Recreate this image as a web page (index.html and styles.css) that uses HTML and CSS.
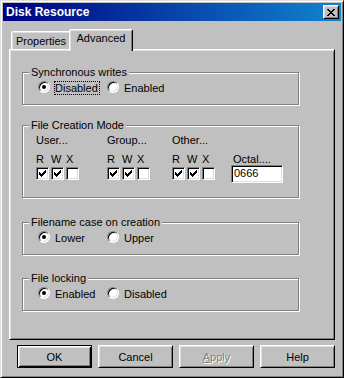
FILE: index.html
```html
<!DOCTYPE html>
<html lang="en">
  <head>
    <meta charset="utf-8"/>
    <title>Disk Resource</title>
    <link rel="stylesheet" href="styles.css">
  </head>
  <body>
    <div class="dialog">
      <div class="dialog__titlebar">
        <span class="dialog__title">Disk Resource</span>
        <button type="button" class="dialog__close" aria-label="Close">
          <svg width="8" height="7" viewBox="0 0 8 7" shape-rendering="crispEdges">
            <path fill="#000" d="M0 0h2v1H0zM6 0h2v1H6zM1 1h2v1H1zM5 1h2v1H5zM2 2h4v1H2zM3 3h2v1H3zM2 4h4v1H2zM1 5h2v1H1zM5 5h2v1H5zM0 6h2v1H0zM6 6h2v1H6z"/>
          </svg>
        </button>
      </div>

      <div class="dialog__body">
        <div class="tabs">
          <div class="tabs__tab">Properties</div>
          <div class="tabs__tab tabs__tab--active">Advanced</div>
        </div>

        <div class="tabs__panel">
          <fieldset class="group">
            <legend class="group__title">Synchronous writes</legend>
            <div class="options">
              <label class="option"><span class="radio radio--checked"></span><span class="option__text option__text--focus">Disabled</span></label>
              <label class="option"><span class="radio"></span><span class="option__text">Enabled</span></label>
            </div>
          </fieldset>

          <fieldset class="group group--mode">
            <legend class="group__title">File Creation Mode</legend>
            <div class="mode">
              <div class="perm">
                <div class="perm__label">User...</div>
                <div class="perm__letters"><span>R</span><span>W</span><span>X</span></div>
                <div class="perm__checks">
                  <span class="check check--on"></span><span class="check check--on"></span><span class="check"></span>
                </div>
              </div>
              <div class="perm">
                <div class="perm__label">Group...</div>
                <div class="perm__letters"><span>R</span><span>W</span><span>X</span></div>
                <div class="perm__checks">
                  <span class="check check--on"></span><span class="check check--on"></span><span class="check"></span>
                </div>
              </div>
              <div class="perm">
                <div class="perm__label">Other...</div>
                <div class="perm__letters"><span>R</span><span>W</span><span>X</span></div>
                <div class="perm__checks">
                  <span class="check check--on"></span><span class="check check--on"></span><span class="check"></span>
                </div>
              </div>
              <div class="octal">
                <div class="octal__label">Octal....</div>
                <div class="octal__input">0666</div>
              </div>
            </div>
          </fieldset>

          <fieldset class="group group--case">
            <legend class="group__title">Filename case on creation</legend>
            <div class="options">
              <label class="option"><span class="radio radio--checked"></span><span class="option__text">Lower</span></label>
              <label class="option"><span class="radio"></span><span class="option__text">Upper</span></label>
            </div>
          </fieldset>

          <fieldset class="group group--lock">
            <legend class="group__title">File locking</legend>
            <div class="options">
              <label class="option"><span class="radio radio--checked"></span><span class="option__text">Enabled</span></label>
              <label class="option"><span class="radio"></span><span class="option__text">Disabled</span></label>
            </div>
          </fieldset>
        </div>

        <div class="dialog__buttons">
          <button type="button" class="button button--default">OK</button>
          <button type="button" class="button">Cancel</button>
          <button type="button" class="button button--disabled"><u>A</u>pply</button>
          <button type="button" class="button">Help</button>
        </div>
      </div>
    </div>
  </body>
</html>
```

FILE: styles.css
```css
body {
  margin: 0;
  background: #C0C0C0;
  color: #000;
  font-family: "Liberation Sans", Arial, sans-serif;
  font-size: 11px;
}

.dialog {
  box-sizing: border-box;
  width: 344px;
  height: 378px;
  padding: 2px;
  background: #C0C0C0;
  border: 1px solid;
  border-color: #DFDFDF #000 #000 #DFDFDF;
  box-shadow: inset 1px 1px #FFF, inset -1px -1px #808080;
}

.dialog__titlebar {
  display: flex;
  align-items: center;
  justify-content: space-between;
  height: 18px;
  padding: 0 2px 0 3px;
  background: linear-gradient(to right, #000080, #1084D0);
  color: #FFF;
  font-size: 12px;
  font-weight: bold;
}

.dialog__close {
  display: flex;
  align-items: center;
  justify-content: center;
  box-sizing: border-box;
  width: 16px;
  height: 14px;
  padding: 0 1px 0 0;
  background: #C0C0C0;
  border: 1px solid;
  border-color: #FFF #000 #000 #FFF;
  box-shadow: inset 1px 1px #DFDFDF, inset -1px -1px #808080;
}

.dialog__body {
  padding: 8px 6px 0;
}

/* tabs */
.tabs {
  display: flex;
  align-items: flex-end;
  height: 20px;
  padding-left: 2px;
}

.tabs__tab {
  box-sizing: border-box;
  width: 60px;
  height: 18px;
  padding-top: 2px;
  line-height: 14px;
  text-align: center;
  border: 1px solid;
  border-bottom: 0;
  border-color: #FFF #000 transparent #FFF;
  border-radius: 2px 2px 0 0;
  box-shadow: inset 1px 1px #DFDFDF, inset -1px 0 #808080;
}

.tabs__tab--active {
  position: relative;
  z-index: 1;
  width: 64px;
  height: 22px;
  margin: 0 -2px -2px;
  padding-top: 1px;
  background: #C0C0C0;
}

.tabs__panel {
  box-sizing: border-box;
  height: 291px;
  padding: 16px 0 0 12px;
  border: 1px solid;
  border-color: #FFF #000 #000 #FFF;
  box-shadow: inset 1px 1px #DFDFDF, inset -1px -1px #808080;
}

/* group boxes */
.group {
  box-sizing: border-box;
  width: 277px;
  margin: 0;
  padding: 2px 0 9px;
  border: 1px solid #808080;
  box-shadow: inset 1px 1px #FFF, 1px 1px #FFF;
}

.group--mode {
  margin-top: 14px;
  padding-bottom: 14px;
}

.group--case {
  margin-top: 18px;
}

.group--lock {
  margin-top: 17px;
}

.group__title {
  margin-left: 6px;
  padding: 0 2px;
  line-height: 13px;
  background: #C0C0C0;
}

.options {
  display: flex;
  padding-left: 15px;
}

.option {
  display: flex;
  align-items: flex-start;
  gap: 4px;
  width: 69px;
}

.option__text {
  padding-right: 1px;
  line-height: 12px;
  border: 1px dotted transparent;
}

.option__text--focus {
  border-color: #000;
}

.radio {
  position: relative;
  box-sizing: border-box;
  width: 12px;
  height: 12px;
  flex: none;
  background: #FFF;
  border: 1px solid;
  border-color: #808080 #FFF #FFF #808080;
  border-radius: 50%;
  box-shadow: inset 1px 1px #000, inset -1px -1px #DFDFDF;
}

.radio--checked::after {
  content: "";
  position: absolute;
  top: 3px;
  left: 3px;
  width: 4px;
  height: 4px;
  background: #000;
  border-radius: 50%;
}

/* file creation mode */
.mode {
  display: grid;
  grid-template-columns: 71px 65px 59px auto;
  padding-left: 13px;
}

.perm__label {
  margin-bottom: 6px;
  line-height: 13px;
}

.perm__letters,
.perm__checks {
  display: flex;
  gap: 2px;
}

.perm__letters span {
  width: 13px;
  line-height: 13px;
}

.perm__checks {
  margin-top: 1px;
}

.check {
  box-sizing: border-box;
  width: 13px;
  height: 13px;
  padding: 2px 0 0 2px;
  background: #FFF;
  border: 1px solid;
  border-color: #808080 #FFF #FFF #808080;
  box-shadow: inset 1px 1px #000, inset -1px -1px #DFDFDF;
}

.check--on {
  background: #FFF url("data:image/svg+xml,%3Csvg xmlns='http://www.w3.org/2000/svg' width='7' height='7' shape-rendering='crispEdges'%3E%3Cpath d='M6 0h1v1H6zM5 1h2v1H5zM0 2h1v1H0zM4 2h3v1H4zM0 3h2v1H0zM3 3h3v1H3zM0 4h5v1H0zM1 5h3v1H1zM2 6h1v1H2z'/%3E%3C/svg%3E") no-repeat 2px 2px;
}

.octal {
  padding-top: 19px;
}

.octal__label {
  padding-left: 2px;
  line-height: 12px;
}

.octal__input {
  box-sizing: border-box;
  width: 52px;
  height: 18px;
  padding-left: 2px;
  line-height: 15px;
  background: #FFF;
  border: 1px solid;
  border-color: #808080 #FFF #FFF #808080;
  box-shadow: inset 1px 1px #000, inset -1px -1px #DFDFDF;
}

/* buttons */
.dialog__buttons {
  display: flex;
  justify-content: flex-end;
  gap: 6px;
  margin-top: 5px;
}

.button {
  box-sizing: border-box;
  width: 75px;
  height: 23px;
  padding: 0;
  background: #C0C0C0;
  border: 1px solid;
  border-color: #FFF #000 #000 #FFF;
  box-shadow: inset 1px 1px #DFDFDF, inset -1px -1px #808080;

  color: #000;
  font: inherit;
}

.button--default {
  border-color: #000;
  box-shadow: inset 1px 1px #FFF, inset -1px -1px #000, inset 2px 2px #DFDFDF, inset -2px -2px #808080;
}

.button--disabled {
  color: #808080;
  text-shadow: 1px 1px #FFF;
}
```
